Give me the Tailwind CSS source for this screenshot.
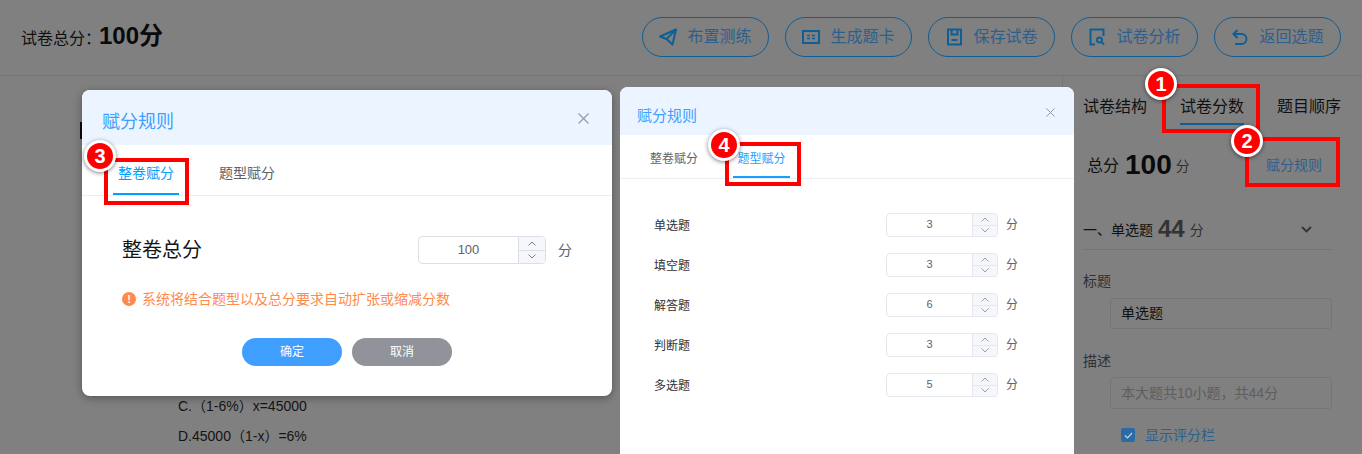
<!DOCTYPE html>
<html lang="zh-CN">
<head>
    <meta charset="UTF-8">
    <meta name="viewport" content="width=device-width, initial-scale=1.0">
    <title>赋分规则</title>
    <script src="https://cdn.jsdelivr.net/npm/@tailwindcss/browser@4"></script>
</head>
<body class="bg-[#808080] font-['Liberation_Sans','Noto_Sans_CJK_SC',sans-serif] text-[#101010]">
<div class="relative w-[1362px] h-[454px] overflow-hidden flex flex-col">

    <!-- top bar -->
    <header class="h-[76px] shrink-0 border-b border-[#747474] flex items-center pl-[21px] pr-[21px]">
        <span class="text-[16px] leading-6 mt-[3px]">试卷总分：</span>
        <span class="text-[24px] leading-8 font-bold -ml-[2px] -mt-[3px] text-[#0a0a0a]">100分</span>
        <div class="ml-auto flex gap-[16px] -mt-[1px]">
            <button class="w-[127px] h-[40px] rounded-full border border-[#0d5f96] flex items-center justify-center gap-[10px] text-[16px] text-[#2d5f8e]">
                <svg class="w-[18px] h-[18px] text-[#0d5f96]" viewBox="0 0 18 18" fill="none" stroke="currentColor" stroke-width="2" stroke-linejoin="round"><path d="M17 1.5 1 8.5l6.5 2.5 6 5.5z"/><path d="M17 1.5 7.5 11"/></svg>
                布置测练
            </button>
            <button class="w-[127px] h-[40px] rounded-full border border-[#0d5f96] flex items-center justify-center gap-[10px] text-[16px] text-[#2d5f8e]">
                <svg class="w-[18px] h-[18px] text-[#0d5f96]" viewBox="0 0 18 18" fill="none" stroke="currentColor" stroke-width="2"><rect x="1" y="3" width="16" height="12"/><path d="M5 7.5h3M10 7.5h3M5 10.5h3M10 10.5h3" stroke-width="1.6"/></svg>
                生成题卡
            </button>
            <button class="w-[127px] h-[40px] rounded-full border border-[#0d5f96] flex items-center justify-center gap-[10px] text-[16px] text-[#2d5f8e]">
                <svg class="w-[18px] h-[18px] text-[#0d5f96]" viewBox="0 0 18 18" fill="none" stroke="currentColor" stroke-width="2"><rect x="3" y="1.5" width="13" height="15"/><path d="M6.5 2v4.500h6V2M6.500 12h6"/></svg>
                保存试卷
            </button>
            <button class="w-[127px] h-[40px] rounded-full border border-[#0d5f96] flex items-center justify-center gap-[10px] text-[16px] text-[#2d5f8e]">
                <svg class="w-[18px] h-[18px] text-[#0d5f96]" viewBox="0 0 18 18" fill="none" stroke="currentColor" stroke-width="2"><path d="M7 16.500H2.500v-15h13V8"/><circle cx="11.500" cy="12" r="2.500"/><path d="m13.500 14 2.500 2.500"/></svg>
                试卷分析
            </button>
            <button class="w-[127px] h-[40px] rounded-full border border-[#0d5f96] flex items-center justify-center gap-[10px] text-[16px] text-[#2d5f8e]">
                <svg class="w-[18px] h-[18px] text-[#0d5f96]" viewBox="0 0 18 18" fill="none" stroke="currentColor" stroke-width="2"><path d="M6.500 2 2.500 6l4 4"/><path d="M3 6h7.500a4.500 4.500 0 0 1 0 10H4"/></svg>
                返回选题
            </button>
        </div>
    </header>

    <div class="flex flex-1 min-h-0">
        <!-- paper behind the dialogs -->
        <main class="w-[1062px] shrink-0 pl-[80px] pt-[46px]">
            <div class="w-[2px] h-[17px] bg-[#0a0a0a]"></div>
            <div class="ml-[98px] mt-[252px] text-[14px] leading-[30px] text-[#141414]">
                <p>C.（1-6%）x=45000</p>
                <p>D.45000（1-x）=6%</p>
            </div>
        </main>

        <!-- right panel -->
        <aside class="flex-1 border-l border-[#747474] pl-[20px] pr-[30px]">
            <nav class="flex gap-[33px] pt-[19px] text-[16px] leading-6">
                <span>试卷结构</span>
                <span class="pb-[4px] border-b-2 border-[#0d5f96]">试卷分数</span>
                <span class="-mr-[20px]">题目顺序</span>
            </nav>
            <div class="flex items-center h-[40px] mt-[20px] pl-[4px] -mr-[10px] pr-[20px]">
                <span class="text-[16px] mt-[2px]">总分</span>
                <span class="text-[28px] font-bold ml-[6px] text-[#0a0a0a]">100</span>
                <span class="text-[14px] ml-[4px] mt-[3px] text-[#303030]">分</span>
                <span class="ml-auto text-[14px] text-[#2d5f8e]">赋分规则</span>
            </div>
            <div class="flex items-center h-[41px] mt-[24px] border-b border-[#747474]">
                <span class="text-[14px] mt-[2px]">一、单选题</span>
                <span class="text-[24px] font-bold ml-[5px] text-[#333]">44</span>
                <span class="text-[14px] ml-[5px] mt-[2px] text-[#303030]">分</span>
                <svg class="ml-auto mr-[20px] w-[11px] h-[7px] text-[#333]" viewBox="0 0 11 7" fill="none" stroke="currentColor" stroke-width="1.800"><path d="m1 1 4.500 4.500L10 1"/></svg>
            </div>
            <div class="mt-[21px] text-[14px] leading-5 text-[#303030]">标题</div>
            <div class="mt-[7px] ml-[27px] h-[31px] rounded-[4px] border border-[#747474] flex items-center pl-[10px] text-[14px]">单选题</div>
            <div class="mt-[22px] text-[14px] leading-5 text-[#303030]">描述</div>
            <div class="mt-[6px] ml-[27px] h-[32px] rounded-[4px] border border-[#747474] flex items-center pl-[10px] text-[14px] text-[#5e5e5e]">本大题共10小题，共44分</div>
            <label class="mt-[16px] ml-[38px] h-[20px] flex items-center gap-[10px] text-[14px] text-[#2d5f8e]">
                <span class="w-[14px] h-[14px] rounded-[2px] bg-[#2c6aa6] flex items-center justify-center">
                    <svg class="w-[9px] h-[7px]" viewBox="0 0 9 7" fill="none" stroke="#c8d4e0" stroke-width="1.200"><path d="m1 3.500 2.500 2.500L8 1"/></svg>
                </span>
                显示评分栏
            </label>
        </aside>
    </div>

    <!-- dialog: whole paper -->
    <section class="absolute left-[82px] top-[90px] w-[530px] h-[306px] bg-white rounded-lg shadow-[0_2px_8px_rgba(0,0,0,0.35)] overflow-hidden flex flex-col">
        <div class="h-[55px] shrink-0 bg-[#ecf5ff] flex items-start pl-[20px] pr-[23px]">
            <h2 class="pt-[20px] text-[18px] leading-6 text-[#409eff]">赋分规则</h2>
            <svg class="ml-auto mt-[23px] w-[11px] h-[11px] text-[#8d9aa8]" viewBox="0 0 11 11" stroke="currentColor" stroke-width="1.100"><path d="m.5.500 10 10M10.500.500l-10 10"/></svg>
        </div>
        <div class="h-[51px] shrink-0 border-b border-[#ebeef5] flex pl-[31px] gap-[35px] text-[14px]">
            <div class="w-[66px] text-center text-[#00a0ff] border-b-2 border-[#00a0ff] pt-[18px] leading-5 h-[50px]">整卷赋分</div>
            <div class="w-[66px] text-center text-[#606266] pt-[18px] leading-5">题型赋分</div>
        </div>
        <div class="pt-[40px] px-[40px]">
            <div class="flex items-center h-[28px]">
                <span class="text-[20px] text-[#151515]">整卷总分</span>
                <div class="ml-auto w-[128px] h-[28px] flex rounded-[4px] border border-[#dcdfe6] overflow-hidden">
                    <span class="flex-1 text-center text-[13px] leading-[26px] text-[#606266]">100</span>
                    <div class="w-[27px] flex flex-col border-l border-[#dcdfe6] bg-[#f5f7fa]">
                        <span class="flex-1 flex items-center justify-center border-b border-[#dcdfe6]"><svg class="w-[8px] h-[5px]" viewBox="0 0 8 5" fill="none" stroke="#7a7f88"><path d="m.5 4.500 3.500-3.500 3.500 3.500"/></svg></span>
                        <span class="flex-1 flex items-center justify-center"><svg class="w-[8px] h-[5px]" viewBox="0 0 8 5" fill="none" stroke="#7a7f88"><path d="m.5.500 3.500 3.500 3.500-3.500"/></svg></span>
                    </div>
                </div>
                <span class="ml-[12px] text-[14px] text-[#606266]">分</span>
            </div>
            <p class="mt-[25px] flex items-center gap-[6px] text-[14px] leading-5 text-[#ff8a4c]">
                <span class="w-[14px] h-[14px] rounded-full bg-[#ff8a4c] text-white text-[11px] leading-[14px] text-center font-bold">!</span>
                系统将结合题型以及总分要求自动扩张或缩减分数
            </p>
            <div class="mt-[29px] flex justify-center gap-[10px] text-[12px] text-white">
                <button class="w-[100px] h-[28px] rounded-full bg-[#409eff]">确定</button>
                <button class="w-[100px] h-[28px] rounded-full bg-[#909399]">取消</button>
            </div>
        </div>
    </section>

    <!-- dialog: per question type -->
    <section class="absolute left-[620px] top-[87px] w-[454px] h-[380px] bg-white rounded-t-lg overflow-hidden flex flex-col">
        <div class="h-[48px] shrink-0 bg-[#ecf5ff] flex items-start pl-[17px] pr-[19px]">
            <h2 class="pt-[19px] text-[15px] leading-5 text-[#409eff]">赋分规则</h2>
            <svg class="ml-auto mt-[21px] w-[9px] h-[9px] text-[#8d9aa8]" viewBox="0 0 11 11" stroke="currentColor" stroke-width="1.200"><path d="m.5.500 10 10M10.500.500l-10 10"/></svg>
        </div>
        <div class="h-[44px] shrink-0 border-b border-[#ebeef5] flex pl-[25px] gap-[30px] text-[12px]">
            <div class="w-[58px] text-center text-[#606266] pt-[16px] leading-4">整卷赋分</div>
            <div class="w-[57px] text-center text-[#1a9fff] border-b-2 border-[#1a9fff] pt-[16px] leading-4 h-[43px]">题型赋分</div>
        </div>
        <div class="pt-[34px] pl-[34px] flex flex-col gap-[16px] text-[12px]">
            <div class="flex items-center h-[24px]">
                <span class="w-[232px] mt-[2px] text-[#303133]">单选题</span>
                <div class="w-[112px] h-[24px] flex rounded-[4px] border border-[#e4e7ed] overflow-hidden">
                    <span class="flex-1 text-center text-[11px] leading-[21px] text-[#606266]">3</span>
                    <div class="w-[25px] flex flex-col border-l border-[#e4e7ed] bg-[#f5f7fa]">
                        <span class="flex-1 flex items-center justify-center border-b border-[#e4e7ed]"><svg class="w-[8px] h-[5px]" viewBox="0 0 8 5" fill="none" stroke="#9a9fa8"><path d="m.5 4.500 3.500-3.500 3.500 3.500"/></svg></span>
                        <span class="flex-1 flex items-center justify-center"><svg class="w-[8px] h-[5px]" viewBox="0 0 8 5" fill="none" stroke="#9a9fa8"><path d="m.5.500 3.500 3.500 3.500-3.500"/></svg></span>
                    </div>
                </div>
                <span class="ml-[8px] text-[#606266]">分</span>
            </div>
            <div class="flex items-center h-[24px]">
                <span class="w-[232px] mt-[2px] text-[#303133]">填空题</span>
                <div class="w-[112px] h-[24px] flex rounded-[4px] border border-[#e4e7ed] overflow-hidden">
                    <span class="flex-1 text-center text-[11px] leading-[21px] text-[#606266]">3</span>
                    <div class="w-[25px] flex flex-col border-l border-[#e4e7ed] bg-[#f5f7fa]">
                        <span class="flex-1 flex items-center justify-center border-b border-[#e4e7ed]"><svg class="w-[8px] h-[5px]" viewBox="0 0 8 5" fill="none" stroke="#9a9fa8"><path d="m.5 4.500 3.500-3.500 3.500 3.500"/></svg></span>
                        <span class="flex-1 flex items-center justify-center"><svg class="w-[8px] h-[5px]" viewBox="0 0 8 5" fill="none" stroke="#9a9fa8"><path d="m.5.500 3.500 3.500 3.500-3.500"/></svg></span>
                    </div>
                </div>
                <span class="ml-[8px] text-[#606266]">分</span>
            </div>
            <div class="flex items-center h-[24px]">
                <span class="w-[232px] mt-[2px] text-[#303133]">解答题</span>
                <div class="w-[112px] h-[24px] flex rounded-[4px] border border-[#e4e7ed] overflow-hidden">
                    <span class="flex-1 text-center text-[11px] leading-[21px] text-[#606266]">6</span>
                    <div class="w-[25px] flex flex-col border-l border-[#e4e7ed] bg-[#f5f7fa]">
                        <span class="flex-1 flex items-center justify-center border-b border-[#e4e7ed]"><svg class="w-[8px] h-[5px]" viewBox="0 0 8 5" fill="none" stroke="#9a9fa8"><path d="m.5 4.500 3.500-3.500 3.500 3.500"/></svg></span>
                        <span class="flex-1 flex items-center justify-center"><svg class="w-[8px] h-[5px]" viewBox="0 0 8 5" fill="none" stroke="#9a9fa8"><path d="m.5.500 3.500 3.500 3.500-3.500"/></svg></span>
                    </div>
                </div>
                <span class="ml-[8px] text-[#606266]">分</span>
            </div>
            <div class="flex items-center h-[24px]">
                <span class="w-[232px] mt-[2px] text-[#303133]">判断题</span>
                <div class="w-[112px] h-[24px] flex rounded-[4px] border border-[#e4e7ed] overflow-hidden">
                    <span class="flex-1 text-center text-[11px] leading-[21px] text-[#606266]">3</span>
                    <div class="w-[25px] flex flex-col border-l border-[#e4e7ed] bg-[#f5f7fa]">
                        <span class="flex-1 flex items-center justify-center border-b border-[#e4e7ed]"><svg class="w-[8px] h-[5px]" viewBox="0 0 8 5" fill="none" stroke="#9a9fa8"><path d="m.5 4.500 3.500-3.500 3.500 3.500"/></svg></span>
                        <span class="flex-1 flex items-center justify-center"><svg class="w-[8px] h-[5px]" viewBox="0 0 8 5" fill="none" stroke="#9a9fa8"><path d="m.5.500 3.500 3.500 3.500-3.500"/></svg></span>
                    </div>
                </div>
                <span class="ml-[8px] text-[#606266]">分</span>
            </div>
            <div class="flex items-center h-[24px]">
                <span class="w-[232px] mt-[2px] text-[#303133]">多选题</span>
                <div class="w-[112px] h-[24px] flex rounded-[4px] border border-[#e4e7ed] overflow-hidden">
                    <span class="flex-1 text-center text-[11px] leading-[21px] text-[#606266]">5</span>
                    <div class="w-[25px] flex flex-col border-l border-[#e4e7ed] bg-[#f5f7fa]">
                        <span class="flex-1 flex items-center justify-center border-b border-[#e4e7ed]"><svg class="w-[8px] h-[5px]" viewBox="0 0 8 5" fill="none" stroke="#9a9fa8"><path d="m.5 4.500 3.500-3.500 3.500 3.500"/></svg></span>
                        <span class="flex-1 flex items-center justify-center"><svg class="w-[8px] h-[5px]" viewBox="0 0 8 5" fill="none" stroke="#9a9fa8"><path d="m.5.500 3.500 3.500 3.500-3.500"/></svg></span>
                    </div>
                </div>
                <span class="ml-[8px] text-[#606266]">分</span>
            </div>
        </div>
    </section>

    <!-- annotation boxes -->
    <div class="absolute left-[1162px] top-[84px] w-[98px] h-[49px] border-[4px] border-[#ff0000]"></div>
    <div class="absolute left-[1245px] top-[137px] w-[95px] h-[50px] border-[4px] border-[#ff0000]"></div>
    <div class="absolute left-[104px] top-[158px] w-[85px] h-[47px] border-[4px] border-[#ff0000]"></div>
    <div class="absolute left-[725px] top-[142px] w-[76px] h-[44px] border-[4px] border-[#ff0000]"></div>

    <!-- numbered badges -->
    <span class="absolute left-[1145px] top-[68px] w-[32px] h-[32px] rounded-full bg-[#ff0000] border-[3px] border-white shadow-[0_1px_4px_rgba(0,0,0,0.5)] flex items-center justify-center text-white font-bold text-[20px]">1</span>
    <span class="absolute left-[1231px] top-[125px] w-[32px] h-[32px] rounded-full bg-[#ff0000] border-[3px] border-white shadow-[0_1px_4px_rgba(0,0,0,0.5)] flex items-center justify-center text-white font-bold text-[20px]">2</span>
    <span class="absolute left-[84px] top-[140px] w-[32px] h-[32px] rounded-full bg-[#ff0000] border-[3px] border-white shadow-[0_1px_4px_rgba(0,0,0,0.5)] flex items-center justify-center text-white font-bold text-[20px]">3</span>
    <span class="absolute left-[708px] top-[129px] w-[32px] h-[32px] rounded-full bg-[#ff0000] border-[3px] border-white shadow-[0_1px_4px_rgba(0,0,0,0.5)] flex items-center justify-center text-white font-bold text-[20px]">4</span>
</div>
</body>
</html>
